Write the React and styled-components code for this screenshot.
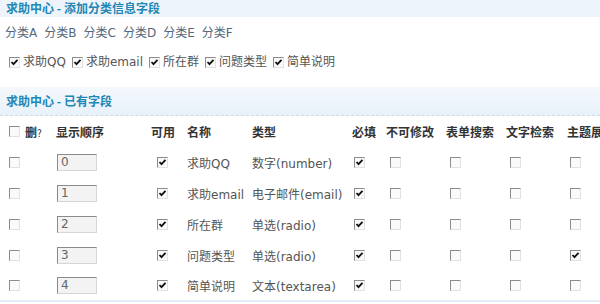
import styled, { createGlobalStyle } from 'styled-components'

const Global = createGlobalStyle`
    body {
        margin: 0;
        background: #fff;
        font-family: "DejaVu Sans", "Noto Sans CJK SC", sans-serif;
        font-size: 12px;
        color: #555;
    }
`

const Page = styled.div`
    width: 600px;
    height: 304px;
    overflow: hidden;
`
const TopBand = styled.div`
    height: 17px;
    background: #eef4fb;
    padding-left: 6px;
`
const BandTitle = styled.h2`
    margin: 0;
    font-family: "Noto Sans CJK SC", sans-serif;
    font-size: 12px;
    font-weight: 700;
    line-height: 16px;
    color: #2187b5;
`
const Links = styled.div`
    display: flex;
    gap: 7px;
    margin-top: 8px;
    padding-left: 5px;
    line-height: 16px;
    color: #56677a;
`
const FieldRow = styled.div`
    display: flex;
    align-items: center;
    gap: 6px;
    margin-top: 13px;
    padding-left: 9px;
    line-height: 16px;
`
const Field = styled.label`
    display: flex;
    align-items: center;
    gap: 3px;
`
const Band = styled.div`
    margin-top: 17px;
    height: 28px;
    display: flex;
    align-items: center;
    padding-left: 6px;
    background: linear-gradient(#f4f8fc, #e8f1fa);
    border-bottom: 1px dashed #cdd9e4;
`
const Row = styled.div`
    display: grid;
    grid-template-columns: 47px 95px 36px 65px 100px 34px 60px 60px 61px 1fr;
    align-items: center;
    height: 31px;
    padding-left: 9px;
    font-weight: ${p => (p.$head ? 700 : 400)};
    color: ${p => (p.$head ? '#333' : '#555')};
    font-family: ${p => (p.$head ? '"Noto Sans CJK SC", sans-serif' : 'inherit')};
    white-space: nowrap;
    border-bottom: ${p => (p.$last ? '2px solid #e2edf7' : 'none')};
    box-sizing: border-box;
`
const Cell = styled.div`
    display: flex;
    align-items: center;
    gap: 5px;
    padding-left: ${p => p.$indent || 0}px;
    overflow: hidden;
`
const Box = styled.span`
    display: inline-flex;
    width: 11px;
    height: 11px;
    box-sizing: border-box;
    border-top: 1px solid #8c8c8c;
    border-left: 1px solid #8c8c8c;
    border-right: 1px solid #e2e2e2;
    border-bottom: 1px solid #e2e2e2;
    background: #fafafa;
    flex: none;
`
const Order = styled.div`
    width: 40px;
    height: 17px;
    box-sizing: border-box;
    border-top: 1px solid #8a8a8a;
    border-left: 1px solid #8a8a8a;
    border-right: 1px solid #d6d6d6;
    border-bottom: 1px solid #d6d6d6;
    background: #f3f3f3;
    padding-left: 3px;
    line-height: 15px;
    color: #666;
    margin-left: 1px;
`
const Q = styled.span`
    font-size: 10px;
    font-weight: 400;
`

const Check = ({ on }) => (
    <Box>
        {on && (
            <svg width="9" height="9" viewBox="0 0 9 9">
                <path d="M1.5 4 L3.5 6.2 L7.5 1.8" fill="none" stroke="#111" strokeWidth="1.8" />
            </svg>
        )}
    </Box>
)

const fields = ['求助QQ', '求助email', '所在群', '问题类型', '简单说明']
const rows = [
    { name: '求助QQ', type: '数字(number)', show: false },
    { name: '求助email', type: '电子邮件(email)', show: false },
    { name: '所在群', type: '单选(radio)', show: false },
    { name: '问题类型', type: '单选(radio)', show: true },
    { name: '简单说明', type: '文本(textarea)', show: false },
]

const App = () => {
    return (
        <Page>
            <Global />
            <TopBand>
                <BandTitle>求助中心 - 添加分类信息字段</BandTitle>
            </TopBand>
            <Links>
                {['A', 'B', 'C', 'D', 'E', 'F'].map(l => <span key={l}>分类{l}</span>)}
            </Links>
            <FieldRow>
                {fields.map(f => (
                    <Field key={f}>
                        <Check on />
                        {f}
                    </Field>
                ))}
            </FieldRow>
            <Band>
                <BandTitle>求助中心 - 已有字段</BandTitle>
            </Band>
            <Row $head>
                <Cell><Check /><span>删<Q>?</Q></span></Cell>
                <Cell>显示顺序</Cell>
                <Cell>可用</Cell>
                <Cell>名称</Cell>
                <Cell>类型</Cell>
                <Cell>必填</Cell>
                <Cell>不可修改</Cell>
                <Cell>表单搜索</Cell>
                <Cell>文字检索</Cell>
                <Cell>主题展示</Cell>
            </Row>
            {rows.map((r, i) => (
                <Row key={r.name} $last={i === rows.length - 1}>
                    <Cell><Check /></Cell>
                    <Cell><Order>{i}</Order></Cell>
                    <Cell $indent={6}><Check on /></Cell>
                    <Cell>{r.name}</Cell>
                    <Cell>{r.type}</Cell>
                    <Cell $indent={2}><Check on /></Cell>
                    <Cell $indent={4}><Check /></Cell>
                    <Cell $indent={4}><Check /></Cell>
                    <Cell $indent={4}><Check /></Cell>
                    <Cell $indent={3}><Check on={r.show} /></Cell>
                </Row>
            ))}
        </Page>
    )
}

export default App
